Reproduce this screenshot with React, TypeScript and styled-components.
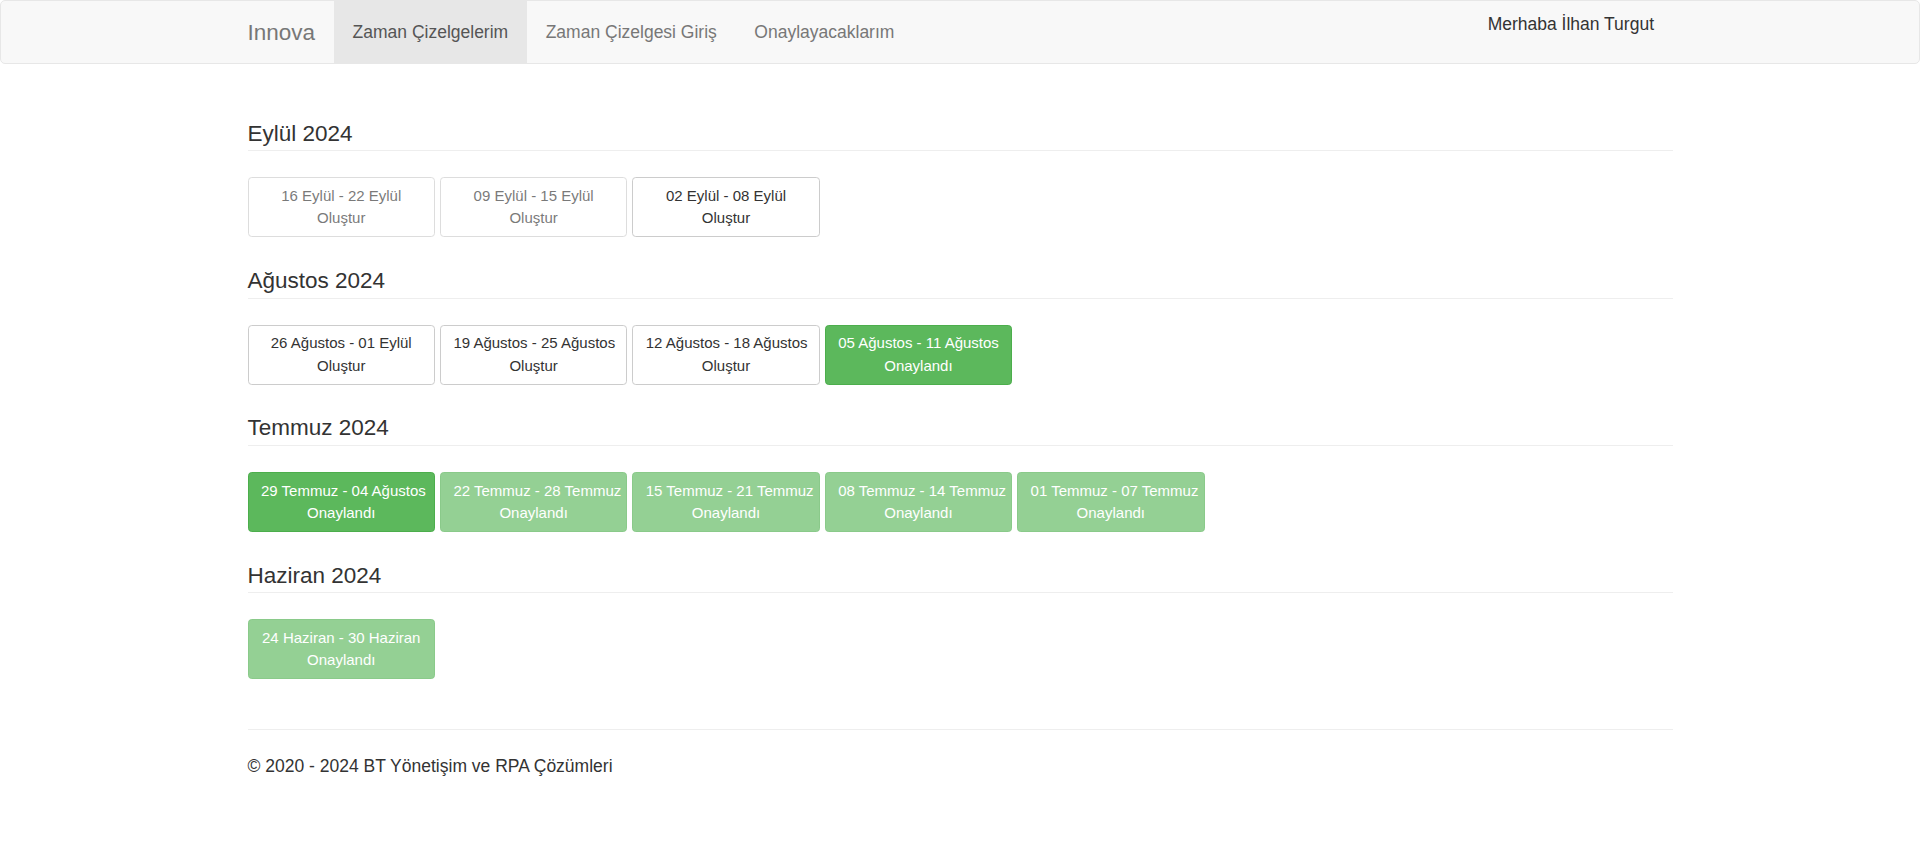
import * as React from 'react';
import styled, { createGlobalStyle, css } from 'styled-components';

type Status = 'draft' | 'approved';

interface Week {
	label: string;
	status: Status;
	disabled?: boolean;
}

interface Month {
	title: string;
	weeks: Week[];
}

var months: Month[] = [
	{
		title: 'Eylül 2024',
		weeks: [
			{ label: '16 Eylül - 22 Eylül', status: 'draft', disabled: true },
			{ label: '09 Eylül - 15 Eylül', status: 'draft', disabled: true },
			{ label: '02 Eylül - 08 Eylül', status: 'draft' },
		],
	},
	{
		title: 'Ağustos 2024',
		weeks: [
			{ label: '26 Ağustos - 01 Eylül', status: 'draft' },
			{ label: '19 Ağustos - 25 Ağustos', status: 'draft' },
			{ label: '12 Ağustos - 18 Ağustos', status: 'draft' },
			{ label: '05 Ağustos - 11 Ağustos', status: 'approved' },
		],
	},
	{
		title: 'Temmuz 2024',
		weeks: [
			{ label: '29 Temmuz - 04 Ağustos', status: 'approved' },
			{ label: '22 Temmuz - 28 Temmuz', status: 'approved', disabled: true },
			{ label: '15 Temmuz - 21 Temmuz', status: 'approved', disabled: true },
			{ label: '08 Temmuz - 14 Temmuz', status: 'approved', disabled: true },
			{ label: '01 Temmuz - 07 Temmuz', status: 'approved', disabled: true },
		],
	},
	{
		title: 'Haziran 2024',
		weeks: [{ label: '24 Haziran - 30 Haziran', status: 'approved', disabled: true }],
	},
];

var navLinks = [
	{ label: 'Zaman Çizelgelerim', active: true },
	{ label: 'Zaman Çizelgesi Giriş' },
	{ label: 'Onaylayacaklarım' },
];

export default function App() {
	return (
		<>
			<GlobalStyle />
			<Navbar>
				<NavContainer>
					<Brand href='#'>Innova</Brand>
					<NavList>
						{navLinks.map((link) => (
							<NavItem key={link.label} $active={link.active}>
								{link.label}
							</NavItem>
						))}
					</NavList>
					<Greeting>Merhaba İlhan Turgut</Greeting>
				</NavContainer>
			</Navbar>
			<Main>
				{months.map((month) => (
					<section key={month.title}>
						<MonthTitle>{month.title}</MonthTitle>
						<WeekRow>
							{month.weeks.map((week) => (
								<WeekButton key={week.label} $status={week.status} $disabled={week.disabled}>
									{week.label}
									<br />
									{week.status === 'approved' ? 'Onaylandı' : 'Oluştur'}
								</WeekButton>
							))}
						</WeekRow>
					</section>
				))}
				<Footer>
					<p>© 2020 - 2024 BT Yönetişim ve RPA Çözümleri</p>
				</Footer>
			</Main>
		</>
	);
}

var GlobalStyle = createGlobalStyle`
	* { box-sizing: border-box; }
	body {
		margin: 0;
		background: #fff;
		color: #333;
		font-family: 'Liberation Sans', Arial, sans-serif;
		font-size: 17.5px;
		line-height: 25px;
	}
`;

var Navbar = styled.nav`
	height: 64px;
	background: #f8f8f8;
	border: 1px solid #e7e7e7;
	border-radius: 5px;
`;

var NavContainer = styled.div`
	width: 1462.5px;
	margin: 0 auto;
	padding: 0 18.75px;
	display: flex;
	align-items: flex-start;
`;

var Brand = styled.a`
	margin-left: -18.75px;
	padding: 18.75px;
	height: 62px;
	font-size: 22.5px;
	line-height: 25px;
	color: #777;
	text-decoration: none;
`;

var NavList = styled.ul`
	display: flex;
	margin: 0;
	padding: 0;
	list-style: none;
`;

var NavItem = styled.li<{ $active?: boolean }>`
	padding: 18.75px;
	height: 62px;
	color: ${(p) => (p.$active ? '#555' : '#777')};
	background: ${(p) => (p.$active ? '#e7e7e7' : 'transparent')};
	cursor: pointer;
`;

var Greeting = styled.p`
	margin: 10.5px 18.5px 0 auto;
	color: #333;
`;

var Main = styled.main`
	width: 1462.5px;
	margin: 0 auto;
	padding: 26px 18.75px 0;
`;

var MonthTitle = styled.h4`
	margin: 31.6px 0 26px;
	padding-bottom: 4px;
	border-bottom: 1px solid #eee;
	font-size: 22.5px;
	font-weight: 500;
	line-height: 24.75px;
	color: #333;
`;

var WeekRow = styled.div`
	display: flex;
	flex-wrap: wrap;
	gap: 4.9px;
`;

var statusStyles = {
	draft: css`
		color: #333;
		background: #fff;
		border-color: #ccc;
	`,
	approved: css`
		color: #fff;
		background: #5cb85c;
		border-color: #4cae4c;
	`,
};

var WeekButton = styled.button<{ $status: Status; $disabled?: boolean }>`
	width: 187.5px;
	height: 60px;
	padding: 6.25px 12.5px;
	border: 1px solid;
	border-radius: 3.75px;
	font-family: inherit;
	font-size: 15px;
	line-height: 22.5px;
	text-align: center;
	white-space: nowrap;
	overflow: visible;
	cursor: pointer;
	${(p) => statusStyles[p.$status]}
	${(p) =>
		p.$disabled &&
		css`
			opacity: 0.65;
			cursor: not-allowed;
		`}
`;

var Footer = styled.footer`
	margin-top: 49.6px;
	border-top: 1px solid #eee;
	padding-top: 24.5px;

	p {
		margin: 0 0 12.5px;
	}
`;
